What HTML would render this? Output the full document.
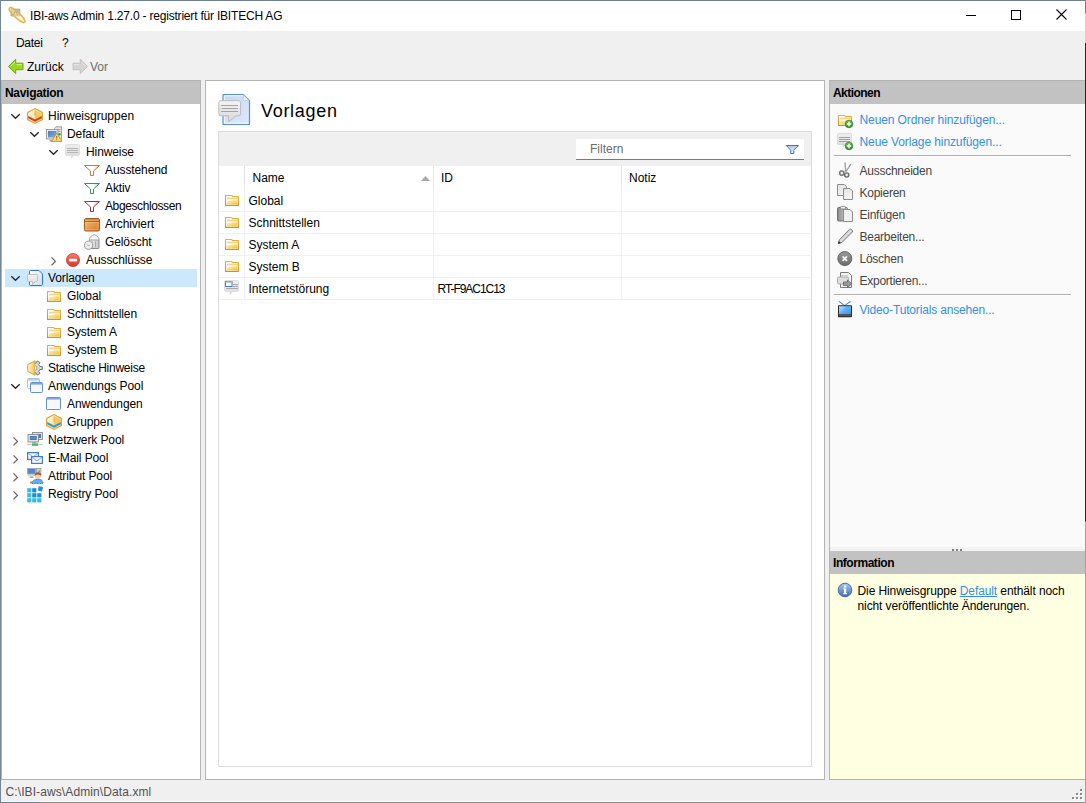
<!DOCTYPE html>
<html><head><meta charset="utf-8">
<style>
*{margin:0;padding:0;box-sizing:border-box}
html,body{width:1086px;height:803px;overflow:hidden;background:#f0f0f0;font-family:"Liberation Sans",sans-serif;font-size:12px;color:#000;position:relative}
.a{position:absolute}
.t{position:absolute;white-space:nowrap}
svg{position:absolute;overflow:visible}
</style></head><body>
<div class="a" style="left:0px;top:0px;width:1086px;height:803px;background:#f0f0f0;"></div>
<div class="a" style="left:1px;top:1px;width:1084px;height:30px;background:#ffffff;"></div>
<div class="a" style="left:0px;top:0px;width:1086px;height:1px;background:#6e8294;"></div>
<div class="a" style="left:0px;top:0px;width:1px;height:803px;background:#728899;"></div>
<div class="a" style="left:0px;top:802px;width:40px;height:1px;background:#6e8294;"></div>
<div class="a" style="left:40px;top:802px;width:1046px;height:1px;background:#8c8c8c;"></div>
<div class="a" style="left:1px;top:801px;width:1084px;height:1px;background:#f8f8f8;"></div>
<div class="a" style="left:1085px;top:0px;width:1px;height:13px;background:#6e8294;"></div>
<div class="a" style="left:1085px;top:13px;width:1px;height:30px;background:#d0d0d0;"></div>
<div class="a" style="left:1085px;top:43px;width:1px;height:478px;background:#262626;"></div>
<div class="a" style="left:1085px;top:521px;width:1px;height:282px;background:#a0a0a0;"></div>
<svg style="left:9px;top:7px" width="16" height="16" viewBox="0 0 16 16"><rect x="2" y="2" width="9" height="7" fill="#a6c4e6" stroke="#7890b0" stroke-width="0.5"/><path d="M4.5 8 L6.5 3.2 L8.5 8" fill="none" stroke="#a08018" stroke-width="1.2"/><g transform="rotate(43 8 8)"><ellipse cx="8" cy="8" rx="10.4" ry="2.8" fill="#fde8b8" fill-opacity="0.5" stroke="#eeb040" stroke-width="1.5"/></g></svg>
<div class="t" style="left:30px;top:7.74px;font-size:12px;line-height:16px;letter-spacing:-0.2px;">IBI-aws Admin 1.27.0 - registriert für IBITECH AG</div>
<svg style="left:960px;top:5px" width="24" height="20" viewBox="0 0 24 20"><rect x="6" y="10" width="10" height="1" fill="#000"/></svg>
<svg style="left:1005px;top:5px" width="24" height="20" viewBox="0 0 24 20"><rect x="6.5" y="5.5" width="9" height="9" fill="none" stroke="#000" stroke-width="1"/></svg>
<svg style="left:1050px;top:5px" width="24" height="20" viewBox="0 0 24 20"><path d="M6.5 4.5 L16.5 14.5 M16.5 4.5 L6.5 14.5" stroke="#000" stroke-width="1.1"/></svg>
<div class="t" style="left:16px;top:35.44px;font-size:12px;line-height:16px;letter-spacing:-0.3px;">Datei</div>
<div class="t" style="left:62px;top:35.44px;font-size:12px;line-height:16px;">?</div>
<svg style="left:8px;top:58px" width="16" height="16" viewBox="0 0 16 16"><path d="M0.5 8.5 L7.7 1.2 L7.7 5.2 L15 5.2 L15 11.7 L7.7 11.7 L7.7 15.6 Z" fill="#9cd820" stroke="#6aa818" stroke-width="1" stroke-linejoin="round"/><path d="M2.6 8.2 L7 3.8 M8.6 6.6 H14" stroke="#d4f488" stroke-width="1" fill="none"/></svg>
<div class="t" style="left:27px;top:58.64px;font-size:12px;line-height:16px;">Zurück</div>
<svg style="left:72px;top:58px" width="16" height="16" viewBox="0 0 16 16"><path d="M15.5 8.5 L8.3 1.2 L8.3 5.2 L1 5.2 L1 11.7 L8.3 11.7 L8.3 15.6 Z" fill="#d4d4d4" stroke="#c2c2c2" stroke-width="1" stroke-linejoin="round"/><path d="M9.2 3.8 L13.4 8.2 M2 6.6 H7.4" stroke="#e8e8e8" stroke-width="1" fill="none"/></svg>
<div class="t" style="left:90px;top:58.64px;font-size:12px;line-height:16px;color:#6d6d6d;">Vor</div>
<div class="a" style="left:1px;top:80px;width:200px;height:700px;background:#ffffff;border:1px solid #b4b4b4;"></div>
<div class="a" style="left:2px;top:81px;width:198px;height:23px;background:#c2c2c2;"></div>
<div class="t" style="left:5px;top:85.24px;font-size:12px;line-height:16px;font-weight:bold;letter-spacing:-0.3px;">Navigation</div>
<div class="a" style="left:5px;top:269px;width:192px;height:18px;background:#cce8ff;"></div>
<svg style="left:9px;top:107px" width="12" height="18" viewBox="0 0 12 18"><polyline points="2.3,7.3 6.5,11.3 10.7,7.3" fill="none" stroke="#262626" stroke-width="1.35"/></svg>
<svg style="left:27px;top:108px" width="16" height="16" viewBox="0 0 16 16"><defs><linearGradient id="hg" x1="0" y1="0" x2="1" y2="1"><stop offset="0" stop-color="#fffbe8"/><stop offset="1" stop-color="#f6d070"/></linearGradient></defs><path d="M8 0.6 L15.4 4.4 L15.4 11.6 L8 15.4 L0.6 11.6 L0.6 4.4 Z" fill="url(#hg)" stroke="#d9a43a" stroke-width="1.1"/><path d="M8 2 L14.5 5.2 L14.5 8.5 L8 11.5 Z" fill="#f2c24a" opacity="0.75"/><path d="M1.2 8 L8 11.4 L14.8 8 L14.8 10.3 L8 13.7 L1.2 10.3 Z" fill="#d63e2c"/><path d="M8 2.5 L8 8" stroke="#dca848" stroke-width="0.8"/></svg>
<div class="t" style="left:48px;top:107.64px;font-size:12px;line-height:16px;letter-spacing:0.0px;">Hinweisgruppen</div>
<svg style="left:28px;top:125px" width="12" height="18" viewBox="0 0 12 18"><polyline points="2.3,7.3 6.5,11.3 10.7,7.3" fill="none" stroke="#262626" stroke-width="1.35"/></svg>
<svg style="left:46px;top:126px" width="16" height="16" viewBox="0 0 16 16"><defs><linearGradient id="dsc" x1="0" y1="0" x2="1" y2="1"><stop offset="0" stop-color="#4c7cc4"/><stop offset="1" stop-color="#88aee0"/></linearGradient></defs><path d="M8.5 2.5 L10 0.8 L15.5 0.8 L15.5 13.5 L8.5 13.5 Z" fill="#e4e4e4" stroke="#8e8e8e" stroke-width="0.8"/><path d="M10.5 3.5 H14.5 M10.5 5.5 H14.5" stroke="#9a9a9a" stroke-width="0.8"/><rect x="0.5" y="3.5" width="11.5" height="9.5" fill="#e8e8e8" stroke="#8c8c8c" stroke-width="0.8"/><rect x="2" y="5" width="8.5" height="6.5" fill="url(#dsc)"/><path d="M3.5 14.8 L7 14.8" stroke="#8a8a8a" stroke-width="1.2"/><circle cx="13.4" cy="8.2" r="1.3" fill="#38a838"/><path d="M10.7 7.2 L16 15.4 L5.6 15.4 Z" fill="#ffe070" stroke="#d08a20" stroke-width="0.9" stroke-linejoin="round"/><rect x="10.3" y="10" width="0.9" height="2.6" fill="#805000"/><rect x="10.3" y="13.3" width="0.9" height="0.9" fill="#805000"/></svg>
<div class="t" style="left:67px;top:125.64px;font-size:12px;line-height:16px;letter-spacing:-0.1px;">Default</div>
<svg style="left:47px;top:143px" width="12" height="18" viewBox="0 0 12 18"><polyline points="2.3,7.3 6.5,11.3 10.7,7.3" fill="none" stroke="#262626" stroke-width="1.35"/></svg>
<svg style="left:65px;top:144px" width="16" height="16" viewBox="0 0 16 16"><defs><linearGradient id="bu" x1="0" y1="0" x2="0" y2="1"><stop offset="0" stop-color="#eeeeee"/><stop offset="1" stop-color="#dcdcdc"/></linearGradient></defs><path d="M1.5 0.5 L13.5 0.5 Q14.5 0.5 14.5 1.5 L14.5 10.5 Q14.5 11.5 13.5 11.5 L9 11.5 L6.5 14 L6.5 11.5 L1.5 11.5 Q0.5 11.5 0.5 10.5 L0.5 1.5 Q0.5 0.5 1.5 0.5 Z" fill="url(#bu)" stroke="#dadada" stroke-width="0.8"/><path d="M2 4.5 H13 M2 6.5 H13 M2 8.5 H13" stroke="#b4b4b4" stroke-width="1"/></svg>
<div class="t" style="left:86px;top:143.64px;font-size:12px;line-height:16px;letter-spacing:-0.1px;">Hinweise</div>
<svg style="left:84px;top:162px" width="16" height="16" viewBox="0 0 16 16"><defs><linearGradient id="fuo" x1="0" y1="0" x2="1" y2="0"><stop offset="0" stop-color="#ffffff"/><stop offset="0.55" stop-color="#ffffff"/><stop offset="1" stop-color="#f2d0b0"/></linearGradient></defs><path d="M0.5 3.5 L15.5 3.5 L9.5 9 L9.5 13.5 L6.5 13.5 L6.5 9 Z" fill="url(#fuo)" stroke="#c87a38" stroke-width="1" stroke-linejoin="miter"/></svg>
<div class="t" style="left:105px;top:161.64px;font-size:12px;line-height:16px;letter-spacing:-0.1px;">Ausstehend</div>
<svg style="left:84px;top:180px" width="16" height="16" viewBox="0 0 16 16"><defs><linearGradient id="fug" x1="0" y1="0" x2="1" y2="0"><stop offset="0" stop-color="#ffffff"/><stop offset="0.55" stop-color="#ffffff"/><stop offset="1" stop-color="#b0e0c0"/></linearGradient></defs><path d="M0.5 3.5 L15.5 3.5 L9.5 9 L9.5 13.5 L6.5 13.5 L6.5 9 Z" fill="url(#fug)" stroke="#2a9a5a" stroke-width="1" stroke-linejoin="miter"/></svg>
<div class="t" style="left:105px;top:179.64px;font-size:12px;line-height:16px;letter-spacing:-0.1px;">Aktiv</div>
<svg style="left:84px;top:198px" width="16" height="16" viewBox="0 0 16 16"><defs><linearGradient id="fur" x1="0" y1="0" x2="1" y2="0"><stop offset="0" stop-color="#ffffff"/><stop offset="0.55" stop-color="#ffffff"/><stop offset="1" stop-color="#f0b8c0"/></linearGradient></defs><path d="M0.5 3.5 L15.5 3.5 L9.5 9 L9.5 13.5 L6.5 13.5 L6.5 9 Z" fill="url(#fur)" stroke="#b82838" stroke-width="1" stroke-linejoin="miter"/></svg>
<div class="t" style="left:105px;top:197.64px;font-size:12px;line-height:16px;letter-spacing:-0.4px;">Abgeschlossen</div>
<svg style="left:84px;top:216px" width="16" height="16" viewBox="0 0 16 16"><defs><linearGradient id="ar" x1="0" y1="0" x2="1" y2="1"><stop offset="0" stop-color="#f8c070"/><stop offset="1" stop-color="#d87430"/></linearGradient></defs><rect x="0.5" y="2.5" width="15" height="12.5" rx="1.5" fill="url(#ar)" stroke="#9a5e24" stroke-width="1"/><path d="M1 5.5 L15 5.5" stroke="#a86a2c" stroke-width="1"/><path d="M1.5 3.5 L14.5 3.5" stroke="#c89050" stroke-width="1.2"/><rect x="2" y="6.5" width="12" height="7" fill="none" stroke="#fcd8a0" stroke-width="0.6" opacity="0.6"/></svg>
<div class="t" style="left:105px;top:215.64px;font-size:12px;line-height:16px;letter-spacing:-0.1px;">Archiviert</div>
<svg style="left:84px;top:234px" width="16" height="16" viewBox="0 0 16 16"><defs><linearGradient id="tr" x1="0" y1="0" x2="1" y2="0"><stop offset="0" stop-color="#f2f2f2"/><stop offset="1" stop-color="#c8c8c8"/></linearGradient></defs><rect x="5.5" y="5.5" width="9.5" height="9" rx="1" fill="url(#tr)" stroke="#8a8a8a" stroke-width="1"/><path d="M5.3 6 Q5.5 2.2 10.2 0.6 Q14.8 2.2 15.2 6 Z" fill="#f6f6f6" stroke="#a0a0a0" stroke-width="0.9"/><path d="M8.5 7.5 V13.5 M11.5 7.5 V13.5" stroke="#a8a8a8" stroke-width="1"/><circle cx="4.6" cy="11.2" r="4.1" fill="#ededed" stroke="#9c9c9c" stroke-width="1"/><path d="M2.8 10.8 L5.8 11.8" stroke="#b0b0b0" stroke-width="0.9"/></svg>
<div class="t" style="left:105px;top:233.64px;font-size:12px;line-height:16px;letter-spacing:-0.1px;">Gelöscht</div>
<svg style="left:47px;top:251px" width="12" height="18" viewBox="0 0 12 18"><polyline points="4.5,6.4 8.4,10.4 4.5,14.4" fill="none" stroke="#6a6a6a" stroke-width="1.35"/></svg>
<svg style="left:65px;top:252px" width="16" height="16" viewBox="0 0 16 16"><defs><linearGradient id="mi" x1="0" y1="0" x2="0" y2="1"><stop offset="0" stop-color="#f87868"/><stop offset="1" stop-color="#d83828"/></linearGradient></defs><circle cx="8" cy="8" r="6.6" fill="url(#mi)" stroke="#c84838" stroke-width="0.8"/><rect x="4" y="6.8" width="8" height="2.6" fill="#ffffff"/></svg>
<div class="t" style="left:86px;top:251.64px;font-size:12px;line-height:16px;letter-spacing:-0.1px;">Ausschlüsse</div>
<svg style="left:9px;top:269px" width="12" height="18" viewBox="0 0 12 18"><polyline points="2.3,7.3 6.5,11.3 10.7,7.3" fill="none" stroke="#262626" stroke-width="1.35"/></svg>
<svg style="left:27px;top:270px" width="16" height="16" viewBox="0 0 16 16"><defs><linearGradient id="vb" x1="0" y1="0" x2="0" y2="1"><stop offset="0" stop-color="#f2f2f2"/><stop offset="1" stop-color="#dcdcdc"/></linearGradient></defs><defs><linearGradient id="vp" x1="0" y1="0" x2="1" y2="1"><stop offset="0" stop-color="#ffffff"/><stop offset="1" stop-color="#c8dcf8"/></linearGradient></defs><path d="M3.5 0.5 L12 0.5 L15.5 4 L15.5 14.5 Q15.5 15.5 14.5 15.5 L3.5 15.5 Q2.5 15.5 2.5 14.5 L2.5 1.5 Q2.5 0.5 3.5 0.5 Z" fill="url(#vp)" stroke="#3c74cc" stroke-width="1"/><path d="M1.2 4.5 L9.8 4.5 Q10.5 4.5 10.5 5.2 L10.5 10.8 Q10.5 11.5 9.8 11.5 L8.5 11.5 L5.5 14.5 L5.5 11.5 L1.2 11.5 Q0.5 11.5 0.5 10.8 L0.5 5.2 Q0.5 4.5 1.2 4.5 Z" fill="url(#vb)" stroke="#bdbdbd" stroke-width="0.9"/></svg>
<div class="t" style="left:48px;top:269.64px;font-size:12px;line-height:16px;letter-spacing:-0.1px;">Vorlagen</div>
<svg style="left:46px;top:288px" width="16" height="16" viewBox="0 0 16 16"><defs><linearGradient id="fo" x1="0" y1="0" x2="1" y2="1"><stop offset="0" stop-color="#fff4c0"/><stop offset="1" stop-color="#f0c420"/></linearGradient></defs><defs><linearGradient id="fs" x1="0" y1="0" x2="0" y2="1"><stop offset="0" stop-color="#dcb448"/><stop offset="1" stop-color="#e0882c"/></linearGradient></defs><path d="M1.5 3.5 L7.8 3.5 L8.6 4.6 L14.4 4.6 L14.4 13.4 L1.5 13.4 Z" fill="#ffffff" stroke="url(#fs)" stroke-width="1.1" stroke-linejoin="round"/><rect x="3" y="5.6" width="11" height="1.8" fill="#f4d880"/><path d="M2.6 9 L7 9 L8 8.2 L13.6 8.2 L13.6 12.6 L2.6 12.6 Z" fill="url(#fo)"/></svg>
<div class="t" style="left:67px;top:287.64px;font-size:12px;line-height:16px;letter-spacing:-0.1px;">Global</div>
<svg style="left:46px;top:306px" width="16" height="16" viewBox="0 0 16 16"><defs><linearGradient id="fo" x1="0" y1="0" x2="1" y2="1"><stop offset="0" stop-color="#fff4c0"/><stop offset="1" stop-color="#f0c420"/></linearGradient></defs><defs><linearGradient id="fs" x1="0" y1="0" x2="0" y2="1"><stop offset="0" stop-color="#dcb448"/><stop offset="1" stop-color="#e0882c"/></linearGradient></defs><path d="M1.5 3.5 L7.8 3.5 L8.6 4.6 L14.4 4.6 L14.4 13.4 L1.5 13.4 Z" fill="#ffffff" stroke="url(#fs)" stroke-width="1.1" stroke-linejoin="round"/><rect x="3" y="5.6" width="11" height="1.8" fill="#f4d880"/><path d="M2.6 9 L7 9 L8 8.2 L13.6 8.2 L13.6 12.6 L2.6 12.6 Z" fill="url(#fo)"/></svg>
<div class="t" style="left:67px;top:305.64px;font-size:12px;line-height:16px;letter-spacing:-0.1px;">Schnittstellen</div>
<svg style="left:46px;top:324px" width="16" height="16" viewBox="0 0 16 16"><defs><linearGradient id="fo" x1="0" y1="0" x2="1" y2="1"><stop offset="0" stop-color="#fff4c0"/><stop offset="1" stop-color="#f0c420"/></linearGradient></defs><defs><linearGradient id="fs" x1="0" y1="0" x2="0" y2="1"><stop offset="0" stop-color="#dcb448"/><stop offset="1" stop-color="#e0882c"/></linearGradient></defs><path d="M1.5 3.5 L7.8 3.5 L8.6 4.6 L14.4 4.6 L14.4 13.4 L1.5 13.4 Z" fill="#ffffff" stroke="url(#fs)" stroke-width="1.1" stroke-linejoin="round"/><rect x="3" y="5.6" width="11" height="1.8" fill="#f4d880"/><path d="M2.6 9 L7 9 L8 8.2 L13.6 8.2 L13.6 12.6 L2.6 12.6 Z" fill="url(#fo)"/></svg>
<div class="t" style="left:67px;top:323.64px;font-size:12px;line-height:16px;letter-spacing:-0.1px;">System A</div>
<svg style="left:46px;top:342px" width="16" height="16" viewBox="0 0 16 16"><defs><linearGradient id="fo" x1="0" y1="0" x2="1" y2="1"><stop offset="0" stop-color="#fff4c0"/><stop offset="1" stop-color="#f0c420"/></linearGradient></defs><defs><linearGradient id="fs" x1="0" y1="0" x2="0" y2="1"><stop offset="0" stop-color="#dcb448"/><stop offset="1" stop-color="#e0882c"/></linearGradient></defs><path d="M1.5 3.5 L7.8 3.5 L8.6 4.6 L14.4 4.6 L14.4 13.4 L1.5 13.4 Z" fill="#ffffff" stroke="url(#fs)" stroke-width="1.1" stroke-linejoin="round"/><rect x="3" y="5.6" width="11" height="1.8" fill="#f4d880"/><path d="M2.6 9 L7 9 L8 8.2 L13.6 8.2 L13.6 12.6 L2.6 12.6 Z" fill="url(#fo)"/></svg>
<div class="t" style="left:67px;top:341.64px;font-size:12px;line-height:16px;letter-spacing:-0.1px;">System B</div>
<svg style="left:27px;top:360px" width="16" height="16" viewBox="0 0 16 16"><defs><linearGradient id="st" x1="0" y1="0" x2="1" y2="0"><stop offset="0" stop-color="#fff6d8"/><stop offset="1" stop-color="#f0c050"/></linearGradient></defs><defs><clipPath id="gclip"><rect x="8" y="0" width="9" height="16"/></clipPath></defs><path d="M8 0.8 L8 15.2 L0.7 11.4 L0.7 4.6 Z" fill="url(#st)" stroke="#d8a83a" stroke-width="1"/><g clip-path="url(#gclip)"><path d="M12.76 6.45 L15.24 6.46 L15.24 9.54 L12.76 9.55 L11.72 11.35 L12.95 13.50 L10.29 15.04 L9.04 12.89 L6.96 12.89 L5.71 15.04 L3.05 13.50 L4.28 11.35 L3.24 9.55 L0.76 9.54 L0.76 6.46 L3.24 6.45 L4.28 4.65 L3.05 2.50 L5.71 0.96 L6.96 3.11 L9.04 3.11 L10.29 0.96 L12.95 2.50 L11.72 4.65 Z" fill="#d8d8d8" stroke="#6a6a6a" stroke-width="0.9" stroke-linejoin="round"/><circle cx="8" cy="8" r="2" fill="#fff" stroke="#8a8a8a" stroke-width="0.7"/></g></svg>
<div class="t" style="left:48px;top:359.64px;font-size:12px;line-height:16px;letter-spacing:-0.25px;">Statische Hinweise</div>
<svg style="left:9px;top:377px" width="12" height="18" viewBox="0 0 12 18"><polyline points="2.3,7.3 6.5,11.3 10.7,7.3" fill="none" stroke="#262626" stroke-width="1.35"/></svg>
<svg style="left:27px;top:378px" width="16" height="16" viewBox="0 0 16 16"><g opacity="0.55"><rect x="0.5" y="0.5" width="12" height="10" rx="1" fill="#f6f8fc" stroke="#6290d0" stroke-width="1"/><rect x="1" y="1" width="11" height="1.6" fill="#7ea6e0"/></g><g opacity="1"><rect x="3.5" y="4.5" width="12" height="10" rx="1" fill="#f6f8fc" stroke="#6290d0" stroke-width="1"/><rect x="4" y="5" width="11" height="1.6" fill="#7ea6e0"/></g></svg>
<div class="t" style="left:48px;top:377.64px;font-size:12px;line-height:16px;letter-spacing:-0.1px;">Anwendungs Pool</div>
<svg style="left:46px;top:396px" width="16" height="16" viewBox="0 0 16 16"><g opacity="1"><rect x="0.5" y="1.5" width="14" height="12" rx="1" fill="#f6f8fc" stroke="#6290d0" stroke-width="1"/><rect x="1" y="2" width="13" height="1.6" fill="#7ea6e0"/></g></svg>
<div class="t" style="left:67px;top:395.64px;font-size:12px;line-height:16px;letter-spacing:-0.1px;">Anwendungen</div>
<svg style="left:46px;top:414px" width="16" height="16" viewBox="0 0 16 16"><defs><linearGradient id="gr" x1="0" y1="0" x2="1" y2="1"><stop offset="0" stop-color="#fffbe8"/><stop offset="1" stop-color="#f6d070"/></linearGradient></defs><path d="M8 0.6 L15.4 4.4 L15.4 11.6 L8 15.4 L0.6 11.6 L0.6 4.4 Z" fill="url(#gr)" stroke="#d9a43a" stroke-width="1.1"/><path d="M8 2 L14.5 5.2 L14.5 8.5 L8 11.5 Z" fill="#f2c24a" opacity="0.75"/><path d="M1.2 8 L8 11.4 L14.8 8 L14.8 10.3 L8 13.7 L1.2 10.3 Z" fill="#2a9ad8"/><path d="M8 2.5 L8 8" stroke="#dca848" stroke-width="0.8"/></svg>
<div class="t" style="left:67px;top:413.64px;font-size:12px;line-height:16px;letter-spacing:-0.1px;">Gruppen</div>
<svg style="left:9px;top:431px" width="12" height="18" viewBox="0 0 12 18"><polyline points="4.5,6.4 8.4,10.4 4.5,14.4" fill="none" stroke="#6a6a6a" stroke-width="1.35"/></svg>
<svg style="left:27px;top:432px" width="16" height="16" viewBox="0 0 16 16"><rect x="5.5" y="0.5" width="10" height="7" fill="#dedede" stroke="#8a8a8a" stroke-width="0.9"/><rect x="10" y="2" width="4" height="4" fill="#4a78c0"/><rect x="1" y="2.5" width="10.5" height="7.5" fill="#e6e6e6" stroke="#8a8a8a" stroke-width="0.9"/><rect x="2.8" y="4" width="7" height="4" fill="#4a78c0"/><path d="M3.5 6 H9" stroke="#88a8d8" stroke-width="0.6"/><path d="M5 10.6 H8" stroke="#a0a0a0" stroke-width="0.9"/><path d="M0 12.5 H16" stroke="#c4cccc" stroke-width="1.4"/><rect x="5" y="11.4" width="6" height="2.4" fill="#3cb878"/><path d="M8 10 V11.5" stroke="#3cb878" stroke-width="1.2"/></svg>
<div class="t" style="left:48px;top:431.64px;font-size:12px;line-height:16px;letter-spacing:-0.1px;">Netzwerk Pool</div>
<svg style="left:9px;top:449px" width="12" height="18" viewBox="0 0 12 18"><polyline points="4.5,6.4 8.4,10.4 4.5,14.4" fill="none" stroke="#6a6a6a" stroke-width="1.35"/></svg>
<svg style="left:27px;top:450px" width="16" height="16" viewBox="0 0 16 16"><rect x="0.6" y="2.6" width="10.8" height="6.8" fill="#f4f7fd" stroke="#4a7cc8" stroke-width="1.2"/><path d="M1 3 L6.0 7.0 L11 3" fill="none" stroke="#7aa0d8" stroke-width="0.9"/><rect x="4.6" y="6.6" width="10.8" height="6.8" fill="#f4f7fd" stroke="#4a7cc8" stroke-width="1.2"/><path d="M5 7 L10.0 11.0 L15 7" fill="none" stroke="#7aa0d8" stroke-width="0.9"/></svg>
<div class="t" style="left:48px;top:449.64px;font-size:12px;line-height:16px;letter-spacing:-0.1px;">E-Mail Pool</div>
<svg style="left:9px;top:467px" width="12" height="18" viewBox="0 0 12 18"><polyline points="4.5,6.4 8.4,10.4 4.5,14.4" fill="none" stroke="#6a6a6a" stroke-width="1.35"/></svg>
<svg style="left:27px;top:468px" width="16" height="16" viewBox="0 0 16 16"><rect x="0.5" y="0.5" width="8" height="5.5" fill="#5a84c4" stroke="#8aa8d8" stroke-width="0.8"/><rect x="1" y="6.2" width="7.5" height="1.6" fill="#c8c8c8"/><rect x="2.5" y="8.5" width="4" height="1.2" fill="#909090"/><rect x="9.5" y="0.5" width="4.5" height="6" fill="#d0d0d0" stroke="#888" stroke-width="0.6"/><path d="M11 3.5 L12.5 2 L13 4" fill="#3cb040"/><path d="M5 15.5 Q5.5 11 11 11 Q16 11 16 15.5 Z" fill="#58b0f4" stroke="#2a5ab8" stroke-width="0.8" stroke-dasharray="1 0.6"/><circle cx="11" cy="8" r="3" fill="#f4cca8"/><path d="M7.6 8 Q7.6 4.2 11 4.2 Q14.4 4.2 14.4 8 Q13 6.2 11 6.4 Q9 6.2 7.6 8 Z" fill="#a05a20"/><rect x="3.2" y="13.5" width="1.8" height="2" fill="#e87020"/></svg>
<div class="t" style="left:48px;top:467.64px;font-size:12px;line-height:16px;letter-spacing:-0.1px;">Attribut Pool</div>
<svg style="left:9px;top:485px" width="12" height="18" viewBox="0 0 12 18"><polyline points="4.5,6.4 8.4,10.4 4.5,14.4" fill="none" stroke="#6a6a6a" stroke-width="1.35"/></svg>
<svg style="left:27px;top:486px" width="16" height="16" viewBox="0 0 16 16"><rect x="0.2" y="2.2" width="4.2" height="4.2" fill="#38b8ec"/><rect x="5.2" y="2.2" width="4.2" height="4.2" fill="#1690d0"/><rect x="0.2" y="7.2" width="4.2" height="4.2" fill="#38b8ec"/><rect x="5.2" y="7.2" width="4.2" height="4.2" fill="#1690d0"/><rect x="10.2" y="7.2" width="4.2" height="4.2" fill="#1a94d4"/><rect x="0.2" y="12.2" width="4.2" height="4.2" fill="#38b8ec"/><rect x="5.2" y="12.2" width="4.2" height="4.2" fill="#38b8ec"/><rect x="10.2" y="12.2" width="4.2" height="4.2" fill="#38b8ec"/><rect x="11.2" y="0.6" width="4.4" height="4.4" fill="#1a94d4" transform="rotate(12 13.4 2.8)"/></svg>
<div class="t" style="left:48px;top:485.64px;font-size:12px;line-height:16px;letter-spacing:-0.1px;">Registry Pool</div>
<div class="a" style="left:201px;top:80px;width:4px;height:700px;background:#f0f0f0;"></div>
<div class="a" style="left:205px;top:80px;width:620px;height:700px;background:#ffffff;border:1px solid #b4b4b4;"></div>
<svg style="left:218px;top:93px" width="32" height="32" viewBox="0 0 32 32"><defs><linearGradient id="pbp" x1="0" y1="0" x2="1" y2="1"><stop offset="0" stop-color="#c4d8f6"/><stop offset="1" stop-color="#dde9fb"/></linearGradient></defs><defs><linearGradient id="pbb" x1="0" y1="0" x2="0" y2="1"><stop offset="0" stop-color="#f4f4f4"/><stop offset="1" stop-color="#d8d8d8"/></linearGradient></defs><path d="M5.5 1.5 L25.3 1.5 L31.5 7.7 L31.5 31.2 Q31.5 31.5 31.2 31.5 L5.5 31.5 Q5 31.5 5 31 L5 2 Q5 1.5 5.5 1.5 Z" fill="url(#pbp)" stroke="#5c8ed6" stroke-width="1.2"/><path d="M6.5 2.8 L24.8 2.8 M6.3 3 L6.3 30.2 L30.2 30.2" fill="none" stroke="#ffffff" stroke-width="1" opacity="0.8"/><path d="M25.3 1.8 L25.3 7.7 L31.2 7.7 Z" fill="#eef4fd" stroke="#a8c4ec" stroke-width="0.6"/><path d="M2.8 7.7 L20.6 7.7 Q22.6 7.7 22.6 9.7 L22.6 20.8 Q22.6 22.8 20.6 22.8 L18 22.8 L10.8 28.8 L10.5 22.8 L2.8 22.8 Q0.8 22.8 0.8 20.8 L0.8 9.7 Q0.8 7.7 2.8 7.7 Z" fill="url(#pbb)" stroke="#bcbcbc" stroke-width="1"/><path d="M3 12.5 H20 M3.5 15.5 H20 M3 18.5 H20" stroke="#a4a4a4" stroke-width="1"/></svg>
<div class="t" style="left:261px;top:100.46px;font-size:18px;line-height:22px;letter-spacing:0.7px;">Vorlagen</div>
<div class="a" style="left:218px;top:131px;width:594px;height:636px;background:#ffffff;border:1px solid #dcdcdc;"></div>
<div class="a" style="left:219px;top:132px;width:592px;height:34px;background:#f0f0f0;"></div>
<div class="a" style="left:576px;top:139px;width:228px;height:21px;background:#ffffff;border-bottom:1px solid #7a7a7a;"></div>
<div class="t" style="left:590px;top:140.84px;font-size:12px;line-height:16px;color:#6d6d6d;">Filtern</div>
<svg style="left:785px;top:144px" width="16" height="12" viewBox="0 0 16 12"><defs><linearGradient id="flb" x1="0" y1="0" x2="0" y2="1"><stop offset="0" stop-color="#a8c8f0"/><stop offset="1" stop-color="#f0f6fd"/></linearGradient></defs><path d="M1.3 1.5 L13.6 1.5 L8.8 6.3 L8.8 9.5 L5.8 9.5 L5.8 6.3 Z" fill="url(#flb)" stroke="#3a76d0" stroke-width="1" stroke-linejoin="miter"/></svg>
<div class="a" style="left:244px;top:166px;width:1px;height:24px;background:#e5e5e5;"></div>
<div class="a" style="left:433px;top:166px;width:1px;height:24px;background:#e5e5e5;"></div>
<div class="a" style="left:621px;top:166px;width:1px;height:24px;background:#e5e5e5;"></div>
<div class="t" style="left:252.5px;top:169.54px;font-size:12px;line-height:16px;">Name</div>
<div class="t" style="left:441px;top:169.54px;font-size:12px;line-height:16px;">ID</div>
<div class="t" style="left:629px;top:169.54px;font-size:12px;line-height:16px;">Notiz</div>
<svg style="left:420px;top:175px" width="11" height="7" viewBox="0 0 11 7"><polygon points="1,6 5.5,1 10,6" fill="#a8a8a8"/></svg>
<div class="a" style="left:219px;top:211px;width:591px;height:1px;background:#f0f0f0;"></div>
<div class="a" style="left:244px;top:190px;width:1px;height:21px;background:#f0f0f0;"></div>
<div class="a" style="left:433px;top:190px;width:1px;height:21px;background:#f0f0f0;"></div>
<div class="a" style="left:621px;top:190px;width:1px;height:21px;background:#f0f0f0;"></div>
<svg style="left:224px;top:192px" width="16" height="16" viewBox="0 0 16 16"><defs><linearGradient id="fo" x1="0" y1="0" x2="1" y2="1"><stop offset="0" stop-color="#fff4c0"/><stop offset="1" stop-color="#f0c420"/></linearGradient></defs><defs><linearGradient id="fs" x1="0" y1="0" x2="0" y2="1"><stop offset="0" stop-color="#dcb448"/><stop offset="1" stop-color="#e0882c"/></linearGradient></defs><path d="M1.5 3.5 L7.8 3.5 L8.6 4.6 L14.4 4.6 L14.4 13.4 L1.5 13.4 Z" fill="#ffffff" stroke="url(#fs)" stroke-width="1.1" stroke-linejoin="round"/><rect x="3" y="5.6" width="11" height="1.8" fill="#f4d880"/><path d="M2.6 9 L7 9 L8 8.2 L13.6 8.2 L13.6 12.6 L2.6 12.6 Z" fill="url(#fo)"/></svg>
<div class="t" style="left:248.5px;top:193.44px;font-size:12px;line-height:16px;">Global</div>
<div class="a" style="left:219px;top:233px;width:591px;height:1px;background:#f0f0f0;"></div>
<div class="a" style="left:244px;top:212px;width:1px;height:21px;background:#f0f0f0;"></div>
<div class="a" style="left:433px;top:212px;width:1px;height:21px;background:#f0f0f0;"></div>
<div class="a" style="left:621px;top:212px;width:1px;height:21px;background:#f0f0f0;"></div>
<svg style="left:224px;top:214px" width="16" height="16" viewBox="0 0 16 16"><defs><linearGradient id="fo" x1="0" y1="0" x2="1" y2="1"><stop offset="0" stop-color="#fff4c0"/><stop offset="1" stop-color="#f0c420"/></linearGradient></defs><defs><linearGradient id="fs" x1="0" y1="0" x2="0" y2="1"><stop offset="0" stop-color="#dcb448"/><stop offset="1" stop-color="#e0882c"/></linearGradient></defs><path d="M1.5 3.5 L7.8 3.5 L8.6 4.6 L14.4 4.6 L14.4 13.4 L1.5 13.4 Z" fill="#ffffff" stroke="url(#fs)" stroke-width="1.1" stroke-linejoin="round"/><rect x="3" y="5.6" width="11" height="1.8" fill="#f4d880"/><path d="M2.6 9 L7 9 L8 8.2 L13.6 8.2 L13.6 12.6 L2.6 12.6 Z" fill="url(#fo)"/></svg>
<div class="t" style="left:248.5px;top:215.44px;font-size:12px;line-height:16px;">Schnittstellen</div>
<div class="a" style="left:219px;top:255px;width:591px;height:1px;background:#f0f0f0;"></div>
<div class="a" style="left:244px;top:234px;width:1px;height:21px;background:#f0f0f0;"></div>
<div class="a" style="left:433px;top:234px;width:1px;height:21px;background:#f0f0f0;"></div>
<div class="a" style="left:621px;top:234px;width:1px;height:21px;background:#f0f0f0;"></div>
<svg style="left:224px;top:236px" width="16" height="16" viewBox="0 0 16 16"><defs><linearGradient id="fo" x1="0" y1="0" x2="1" y2="1"><stop offset="0" stop-color="#fff4c0"/><stop offset="1" stop-color="#f0c420"/></linearGradient></defs><defs><linearGradient id="fs" x1="0" y1="0" x2="0" y2="1"><stop offset="0" stop-color="#dcb448"/><stop offset="1" stop-color="#e0882c"/></linearGradient></defs><path d="M1.5 3.5 L7.8 3.5 L8.6 4.6 L14.4 4.6 L14.4 13.4 L1.5 13.4 Z" fill="#ffffff" stroke="url(#fs)" stroke-width="1.1" stroke-linejoin="round"/><rect x="3" y="5.6" width="11" height="1.8" fill="#f4d880"/><path d="M2.6 9 L7 9 L8 8.2 L13.6 8.2 L13.6 12.6 L2.6 12.6 Z" fill="url(#fo)"/></svg>
<div class="t" style="left:248.5px;top:237.44px;font-size:12px;line-height:16px;">System A</div>
<div class="a" style="left:219px;top:277px;width:591px;height:1px;background:#f0f0f0;"></div>
<div class="a" style="left:244px;top:256px;width:1px;height:21px;background:#f0f0f0;"></div>
<div class="a" style="left:433px;top:256px;width:1px;height:21px;background:#f0f0f0;"></div>
<div class="a" style="left:621px;top:256px;width:1px;height:21px;background:#f0f0f0;"></div>
<svg style="left:224px;top:258px" width="16" height="16" viewBox="0 0 16 16"><defs><linearGradient id="fo" x1="0" y1="0" x2="1" y2="1"><stop offset="0" stop-color="#fff4c0"/><stop offset="1" stop-color="#f0c420"/></linearGradient></defs><defs><linearGradient id="fs" x1="0" y1="0" x2="0" y2="1"><stop offset="0" stop-color="#dcb448"/><stop offset="1" stop-color="#e0882c"/></linearGradient></defs><path d="M1.5 3.5 L7.8 3.5 L8.6 4.6 L14.4 4.6 L14.4 13.4 L1.5 13.4 Z" fill="#ffffff" stroke="url(#fs)" stroke-width="1.1" stroke-linejoin="round"/><rect x="3" y="5.6" width="11" height="1.8" fill="#f4d880"/><path d="M2.6 9 L7 9 L8 8.2 L13.6 8.2 L13.6 12.6 L2.6 12.6 Z" fill="url(#fo)"/></svg>
<div class="t" style="left:248.5px;top:259.44px;font-size:12px;line-height:16px;">System B</div>
<div class="a" style="left:219px;top:299px;width:591px;height:1px;background:#f0f0f0;"></div>
<div class="a" style="left:244px;top:278px;width:1px;height:21px;background:#f0f0f0;"></div>
<div class="a" style="left:433px;top:278px;width:1px;height:21px;background:#f0f0f0;"></div>
<div class="a" style="left:621px;top:278px;width:1px;height:21px;background:#f0f0f0;"></div>
<svg style="left:224px;top:280px" width="16" height="16" viewBox="0 0 16 16"><defs><linearGradient id="ms" x1="0" y1="0" x2="0" y2="1"><stop offset="0" stop-color="#efefef"/><stop offset="1" stop-color="#dedede"/></linearGradient></defs><path d="M1.5 0.5 L13.5 0.5 Q14.5 0.5 14.5 1.5 L14.5 10.5 Q14.5 11.5 13.5 11.5 L8.5 11.5 L6 14.5 L6 11.5 L1.5 11.5 Q0.5 11.5 0.5 10.5 L0.5 1.5 Q0.5 0.5 1.5 0.5 Z" fill="url(#ms)" stroke="#d8d8d8" stroke-width="0.8"/><rect x="1.5" y="1.5" width="6.5" height="5" fill="#ffffff" stroke="#4a7cc8" stroke-width="1"/><rect x="1.5" y="1" width="6.5" height="1.5" fill="#78a8e8"/><path d="M9 4.5 H14 M9 6.5 H14 M2 8.5 H14" stroke="#a8a8a8" stroke-width="1"/></svg>
<div class="t" style="left:248.5px;top:281.44px;font-size:12px;line-height:16px;">Internetstörung</div>
<div class="t" style="left:437.5px;top:281.44px;font-size:12px;line-height:16px;letter-spacing:-1.05px;">RT-F9AC1C13</div>
<div class="a" style="left:825px;top:80px;width:4px;height:700px;background:#f0f0f0;"></div>
<div class="a" style="left:829px;top:80px;width:256px;height:700px;background:#fafafa;border-left:1px solid #b4b4b4;border-top:1px solid #b4b4b4;"></div>
<div class="a" style="left:830px;top:81px;width:255px;height:23px;background:#c2c2c2;"></div>
<div class="t" style="left:833px;top:85.24px;font-size:12px;line-height:16px;font-weight:bold;letter-spacing:-0.55px;">Aktionen</div>
<svg style="left:837px;top:112px" width="16" height="16" viewBox="0 0 16 16"><defs><linearGradient id="fo2" x1="0" y1="0" x2="1" y2="1"><stop offset="0" stop-color="#fff4c0"/><stop offset="1" stop-color="#f0c420"/></linearGradient></defs><defs><linearGradient id="fs2" x1="0" y1="0" x2="0" y2="1"><stop offset="0" stop-color="#dcb448"/><stop offset="1" stop-color="#e0882c"/></linearGradient></defs><path d="M1.5 3.5 L7.8 3.5 L8.6 4.6 L14.4 4.6 L14.4 13.4 L1.5 13.4 Z" fill="#ffffff" stroke="url(#fs2)" stroke-width="1.1" stroke-linejoin="round"/><rect x="3" y="5.6" width="11" height="1.8" fill="#f4d880"/><path d="M2.6 9 L7 9 L8 8.2 L13.6 8.2 L13.6 12.6 L2.6 12.6 Z" fill="url(#fo2)"/><defs><linearGradient id="ad" x1="0" y1="0" x2="0" y2="1"><stop offset="0" stop-color="#70c850"/><stop offset="1" stop-color="#2a8a28"/></linearGradient></defs><circle cx="12" cy="12" r="3.8" fill="url(#ad)" stroke="#2a7a28" stroke-width="0.7"/><path d="M9.8 12 H14.2 M12 9.8 V14.2" stroke="#fff" stroke-width="1.5"/></svg>
<div class="t" style="left:859.5px;top:111.84px;font-size:12px;line-height:16px;color:#3390e8;letter-spacing:-0.1px;">Neuen Ordner hinzufügen...</div>
<svg style="left:837px;top:134px" width="16" height="16" viewBox="0 0 16 16"><defs><linearGradient id="at" x1="0" y1="0" x2="0" y2="1"><stop offset="0" stop-color="#f0f0f0"/><stop offset="1" stop-color="#d8d8d8"/></linearGradient></defs><path d="M1.5 -0.5 L13.5 -0.5 Q14.5 -0.5 14.5 0.5 L14.5 9.5 Q14.5 10.5 13.5 10.5 L8.5 10.5 L6 13 L6 10.5 L1.5 10.5 Q0.5 10.5 0.5 9.5 L0.5 0.5 Q0.5 -0.5 1.5 -0.5 Z" fill="url(#at)" stroke="#d4d4d4" stroke-width="0.8"/><path d="M2 3.5 H13 M2 5.5 H13 M2 7.5 H13" stroke="#a4a4a4" stroke-width="1"/><defs><linearGradient id="ad2" x1="0" y1="0" x2="0" y2="1"><stop offset="0" stop-color="#70c850"/><stop offset="1" stop-color="#2a8a28"/></linearGradient></defs><circle cx="12" cy="12" r="3.8" fill="url(#ad2)" stroke="#2a7a28" stroke-width="0.7"/><path d="M9.8 12 H14.2 M12 9.8 V14.2" stroke="#fff" stroke-width="1.5"/></svg>
<div class="t" style="left:859.5px;top:133.84px;font-size:12px;line-height:16px;color:#3390e8;letter-spacing:-0.1px;">Neue Vorlage hinzufügen...</div>
<svg style="left:837px;top:163px" width="16" height="16" viewBox="0 0 16 16"><path d="M8.1 -0.5 L8.6 8.5" stroke="#808080" stroke-width="1.3" fill="none"/><path d="M13.8 1.1 L9 8.5" stroke="#808080" stroke-width="1.3" fill="none"/><path d="M8.1 0 L8.4 7" stroke="#e0e0e0" stroke-width="0.5"/><path d="M13.3 1.6 L9.6 7.5" stroke="#e0e0e0" stroke-width="0.5"/><circle cx="4.8" cy="10.1" r="2.2" fill="#d8d8d8" stroke="#6e6e6e" stroke-width="1.4"/><circle cx="9.7" cy="12" r="2.1" fill="#d8d8d8" stroke="#6e6e6e" stroke-width="1.4"/><circle cx="4.8" cy="10.1" r="0.9" fill="#fafafa"/><circle cx="9.7" cy="12" r="0.8" fill="#fafafa"/></svg>
<div class="t" style="left:859.5px;top:162.84px;font-size:12px;line-height:16px;color:#454545;letter-spacing:-0.25px;">Ausschneiden</div>
<svg style="left:837px;top:185px" width="16" height="16" viewBox="0 0 16 16"><defs><linearGradient id="cp" x1="0" y1="0" x2="1" y2="1"><stop offset="0" stop-color="#e2e2e2"/><stop offset="1" stop-color="#f8f8f8"/></linearGradient></defs><path d="M0.5 -0.5 L7.3 -0.5 L9.3 1.5 L9.3 10.5 L0.5 10.5 Z" fill="url(#cp)" stroke="#8c8c8c" stroke-width="1"/><path d="M6.5 3.5 L13 3.5 L15.5 6 L15.5 14.5 L6.5 14.5 Z" fill="url(#cp)" stroke="#8c8c8c" stroke-width="1"/></svg>
<div class="t" style="left:859.5px;top:184.84px;font-size:12px;line-height:16px;color:#454545;letter-spacing:-0.25px;">Kopieren</div>
<svg style="left:837px;top:207px" width="16" height="16" viewBox="0 0 16 16"><defs><linearGradient id="pa" x1="0" y1="0" x2="1" y2="0"><stop offset="0" stop-color="#8a8a8a"/><stop offset="1" stop-color="#d4d4d4"/></linearGradient></defs><rect x="0.5" y="0.5" width="10" height="13.5" rx="1.2" fill="url(#pa)" stroke="#6e6e6e" stroke-width="1"/><rect x="3.5" y="-0.6" width="5" height="2.6" rx="0.8" fill="#eeeeee" stroke="#7a7a7a" stroke-width="0.8"/><path d="M6.5 2.5 L13 2.5 L15.5 5 L15.5 14.5 L6.5 14.5 Z" fill="#f0f0f0" stroke="#8c8c8c" stroke-width="1"/></svg>
<div class="t" style="left:859.5px;top:206.84px;font-size:12px;line-height:16px;color:#454545;letter-spacing:-0.25px;">Einfügen</div>
<svg style="left:837px;top:229px" width="16" height="16" viewBox="0 0 16 16"><path d="M12.6 0.2 Q13.6 -0.3 14.8 0.9 Q15.9 2 15.4 3 L5 13.4 L1.2 14.6 L2.4 10.8 Z" fill="#e2e2e2" stroke="#7c7c7c" stroke-width="1" stroke-linejoin="round"/><path d="M3.2 11.2 L13.6 1 M4.4 12.6 L14.8 2.2" stroke="#bcbcbc" stroke-width="0.6"/><path d="M1 14.8 L1.8 11.9 L3.9 14 Z" fill="#282828"/></svg>
<div class="t" style="left:859.5px;top:228.84px;font-size:12px;line-height:16px;color:#454545;letter-spacing:-0.25px;">Bearbeiten...</div>
<svg style="left:837px;top:251px" width="16" height="16" viewBox="0 0 16 16"><defs><linearGradient id="de" x1="0" y1="0" x2="0" y2="1"><stop offset="0" stop-color="#9a9a9a"/><stop offset="1" stop-color="#6c6c6c"/></linearGradient></defs><circle cx="7.8" cy="7.6" r="7" fill="url(#de)" stroke="#5a5a5a" stroke-width="0.9"/><path d="M5.6 5.4 L10 9.8 M10 5.4 L5.6 9.8" stroke="#f4f4f4" stroke-width="1.8"/></svg>
<div class="t" style="left:859.5px;top:250.84px;font-size:12px;line-height:16px;color:#454545;letter-spacing:-0.25px;">Löschen</div>
<svg style="left:837px;top:273px" width="16" height="16" viewBox="0 0 16 16"><path d="M3.5 -0.5 L11.5 -0.5 L14.5 2.5 L14.5 14.5 L3.5 14.5 Z" fill="#f2f2f2" stroke="#7c7c7c" stroke-width="1"/><rect x="0.5" y="4" width="11" height="7" rx="1.5" fill="#dedede" stroke="#a4a4a4" stroke-width="0.9"/><rect x="4" y="2" width="7" height="2" fill="#d0d0d0"/><path d="M6.5 9 L10.5 9 L10.5 7 L14.8 10.8 L10.5 14.5 L10.5 12.5 L6.5 12.5 Z" fill="#9a9a9a" stroke="#5e5e5e" stroke-width="0.8" stroke-linejoin="round"/></svg>
<div class="t" style="left:859.5px;top:272.84px;font-size:12px;line-height:16px;color:#454545;letter-spacing:-0.25px;">Exportieren...</div>
<svg style="left:837px;top:302px" width="16" height="16" viewBox="0 0 16 16"><defs><linearGradient id="tvg" x1="0" y1="0" x2="1" y2="1"><stop offset="0" stop-color="#b0dcff"/><stop offset="1" stop-color="#3c98ec"/></linearGradient></defs><path d="M2 -0.6 L7.6 3.6 L13.6 -0.6" stroke="#5a88c0" stroke-width="1.1" fill="none"/><rect x="1" y="3.2" width="14" height="12" rx="0.8" fill="#2a2a2a"/><rect x="2" y="4.2" width="12" height="8" fill="url(#tvg)"/><path d="M2 12.2 L9 4.2 L14 4.2 L14 12.2 Z" fill="#3c98ec" opacity="0.35"/><rect x="2" y="12.4" width="12" height="1.8" fill="#5a5a5a"/><rect x="3" y="12.8" width="1.4" height="1.2" fill="#e82020"/></svg>
<div class="t" style="left:859.5px;top:302.14px;font-size:12px;line-height:16px;color:#3390e8;letter-spacing:-0.17px;">Video-Tutorials ansehen...</div>
<div class="a" style="left:834px;top:155px;width:237px;height:1px;background:#b0b0b0;"></div>
<div class="a" style="left:834px;top:156px;width:237px;height:1px;background:#ffffff;"></div>
<div class="a" style="left:834px;top:294px;width:237px;height:1px;background:#b0b0b0;"></div>
<div class="a" style="left:834px;top:295px;width:237px;height:1px;background:#ffffff;"></div>
<div class="a" style="left:830px;top:547px;width:255px;height:4px;background:#f3f3f3;"></div>
<div class="a" style="left:952px;top:549px;width:2px;height:2px;background:#808080;"></div>
<div class="a" style="left:956px;top:549px;width:2px;height:2px;background:#808080;"></div>
<div class="a" style="left:960px;top:549px;width:2px;height:2px;background:#808080;"></div>
<div class="a" style="left:830px;top:551px;width:255px;height:23px;background:#c2c2c2;"></div>
<div class="t" style="left:833px;top:554.54px;font-size:12px;line-height:16px;font-weight:bold;letter-spacing:-0.45px;">Information</div>
<div class="a" style="left:830px;top:574px;width:255px;height:205px;background:#ffffe1;"></div>
<svg style="left:837px;top:582px" width="16" height="16" viewBox="0 0 16 16"><defs><linearGradient id="in" x1="0" y1="0" x2="0" y2="1"><stop offset="0" stop-color="#a8c8f0"/><stop offset="1" stop-color="#3c6cb8"/></linearGradient></defs><circle cx="8" cy="8" r="6.8" fill="url(#in)" stroke="#3a64a8" stroke-width="0.9"/><rect x="7" y="6.5" width="2.2" height="5" fill="#fff"/><rect x="6.2" y="11" width="3.8" height="1.2" fill="#fff"/><rect x="6.2" y="6.5" width="2" height="1" fill="#fff"/><circle cx="8.1" cy="4.5" r="1.2" fill="#fff"/></svg>
<div class="t" style="left:857.5px;top:583.44px;font-size:12px;line-height:16px;letter-spacing:-0.1px;">Die Hinweisgruppe <span style="color:#3390e8;text-decoration:underline">Default</span> enthält noch</div>
<div class="t" style="left:857.5px;top:598.44px;font-size:12px;line-height:16px;letter-spacing:-0.1px;">nicht veröffentlichte Änderungen.</div>
<div class="a" style="left:829px;top:779px;width:256px;height:1px;background:#b4b4b4;"></div>
<div class="t" style="left:5.5px;top:783.64px;font-size:12px;line-height:16px;color:#505050;letter-spacing:0.1px;">C:\IBI-aws\Admin\Data.xml</div>
<div class="a" style="left:1081px;top:790px;width:2px;height:2px;background:#ffffff;"></div>
<div class="a" style="left:1080px;top:789px;width:2px;height:2px;background:#8a8a8a;"></div>
<div class="a" style="left:1077px;top:794px;width:2px;height:2px;background:#ffffff;"></div>
<div class="a" style="left:1076px;top:793px;width:2px;height:2px;background:#8a8a8a;"></div>
<div class="a" style="left:1081px;top:794px;width:2px;height:2px;background:#ffffff;"></div>
<div class="a" style="left:1080px;top:793px;width:2px;height:2px;background:#8a8a8a;"></div>
<div class="a" style="left:1073px;top:798px;width:2px;height:2px;background:#ffffff;"></div>
<div class="a" style="left:1072px;top:797px;width:2px;height:2px;background:#8a8a8a;"></div>
<div class="a" style="left:1077px;top:798px;width:2px;height:2px;background:#ffffff;"></div>
<div class="a" style="left:1076px;top:797px;width:2px;height:2px;background:#8a8a8a;"></div>
<div class="a" style="left:1081px;top:798px;width:2px;height:2px;background:#ffffff;"></div>
<div class="a" style="left:1080px;top:797px;width:2px;height:2px;background:#8a8a8a;"></div>
</body></html>
